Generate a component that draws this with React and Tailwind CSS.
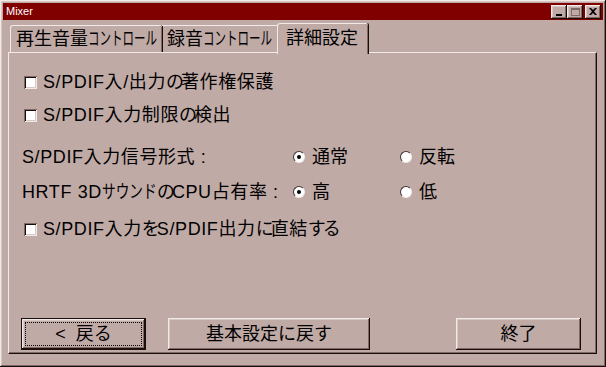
import React from 'react';

const FACE = 'bg-[#c0aaa6]';
const JP = "font-['Liberation_Sans','Noto_Sans_CJK_JP',sans-serif]";
const RAISED =
  'shadow-[inset_-1px_-1px_#1a0e0c,inset_1px_1px_#f2eae8,inset_-2px_-2px_#806864,inset_2px_2px_#d8c8c4]';

// hiragana runs are a little narrower in the original font
function Txt({ children }) {
  if (typeof children !== 'string') return children;
  return children.split(/([\u3041-\u3096]+)/).map((part, i) =>
    /^[\u3041-\u3096]+$/.test(part) ? (
      <span key={i} className="tracking-[-3px]">{part}</span>
    ) : (
      part
    )
  );
}

// narrow katakana, squeezed to the given width
function Kana({ text, width, scale }) {
  return (
    <span className={`inline-block whitespace-nowrap tracking-normal ${width}`}>
      <span className={`inline-block origin-left ${scale}`}>{text}</span>
    </span>
  );
}

function Checkbox() {
  return (
    <span className="w-[13px] h-[13px] bg-white shrink-0 shadow-[inset_1px_1px_#806864,inset_-1px_-1px_#f2eae8,inset_2px_2px_#1a0e0c,inset_-2px_-2px_#d8c8c4]" />
  );
}

function Radio({ checked }) {
  return (
    <span className="relative w-[12px] h-[12px] shrink-0 rounded-full bg-white border border-t-[#403230] border-l-[#403230] border-b-[#f2eae8] border-r-[#f2eae8] flex items-center justify-center">
      {checked && <span className="w-[4px] h-[4px] rounded-full bg-black" />}
    </span>
  );
}

function CheckRow({ label, className }) {
  return (
    <div className={`flex items-center h-[24px] ml-[15px] ${className}`}>
      <Checkbox />
      <span className="ml-[6px] text-[18px] leading-none whitespace-nowrap tracking-[0.6px]">
        <Txt>{label}</Txt>
      </span>
    </div>
  );
}

function RadioRow({ label, options, className }) {
  return (
    <div className={`flex items-center h-[24px] ml-[13px] ${className}`}>
      <span className="w-[271px] text-[18px] leading-none whitespace-nowrap tracking-[0.6px]">{label}</span>
      {options.map((opt, i) => (
        <div key={opt.text} className={`flex items-center ${i === 0 ? 'w-[107px]' : ''}`}>
          <Radio checked={opt.checked} />
          <span className="ml-[7px] text-[18px] leading-none">{opt.text}</span>
        </div>
      ))}
    </div>
  );
}

function TitleButton({ children, className = '' }) {
  return (
    <span className={`w-[16px] h-[14px] ${FACE} ${RAISED} flex items-center justify-center ${className}`}>
      {children}
    </span>
  );
}

export default function App() {
  return (
    <div className={`w-[606px] h-[367px] ${FACE} ${JP} text-black p-[3px] flex flex-col ${RAISED}`}>
      {/* title bar */}
      <div className="h-[17px] bg-[#800000] flex items-center justify-between pl-[3px] pr-[2px]">
        <span className="text-white text-[11px] leading-none">Mixer</span>
        <div className="flex items-center">
          <TitleButton>
            <span className="mt-[6px] w-[6px] h-[2px] bg-black" />
          </TitleButton>
          <TitleButton>
            <span className="w-[9px] h-[8px] border border-[#806864] border-t-2" />
          </TitleButton>
          <TitleButton className="ml-[2px]">
            <svg width="8" height="7" viewBox="0 0 8 7">
              <path d="M0 0h2l2 2 2-2h2L5 3.5 8 7H6L4 5 2 7H0l3-3.5z" fill="#000" />
            </svg>
          </TitleButton>
        </div>
      </div>

      {/* tabs */}
      <div className="flex items-end h-[32px] pl-[7px] relative z-10">
        <div className="w-[152px] h-[27px] rounded-tl-[3px] rounded-tr-[2px] border-t border-l border-[#f2eae8] shadow-[inset_-1px_0_#806864,1px_0_#1a0e0c] flex items-center pl-[5px] text-[18px] leading-none whitespace-nowrap">
          再生音量<Kana text="コントロール" width="w-[69px]" scale="scale-x-[0.64]" />
        </div>
        <div className="w-[117px] h-[27px] rounded-tr-[2px] border-t border-[#f2eae8] shadow-[inset_-1px_0_#806864,1px_0_#1a0e0c] flex items-center pl-[5px] text-[18px] leading-none whitespace-nowrap">
          録音<Kana text="コントロール" width="w-[69px]" scale="scale-x-[0.64]" />
        </div>
        <div className={`-ml-[2px] w-[91px] h-[31px] -mb-[2px] ${FACE} rounded-tl-[3px] rounded-tr-[2px] border-t border-l border-[#f2eae8] shadow-[inset_-1px_0_#806864,1px_0_#1a0e0c] flex items-start pt-[5px] pl-[8px] text-[18px] leading-none whitespace-nowrap`}>
          詳細設定
        </div>
      </div>

      {/* panel */}
      <div className="flex-1 ml-[5px] mr-[6px] mb-[10px] flex flex-col border-t border-l border-[#f2eae8] border-r border-b border-r-[#1a0e0c] border-b-[#1a0e0c] shadow-[inset_-1px_-1px_#806864]">
        <CheckRow label="S/PDIF入/出力の著作権保護" className="mt-[17px]" />
        <CheckRow label="S/PDIF入力制限の検出" className="mt-[9px]" />
        <RadioRow
          label="S/PDIF入力信号形式 :"
          className="mt-[18px]"
          options={[
            { text: '通常', checked: true },
            { text: '反転', checked: false },
          ]}
        />
        <RadioRow
          label={
            <>
              HRTF 3D
              <Kana text="サウンド" width="w-[55px]" scale="scale-x-[0.76]" />
              <Txt>のCPU占有率 :</Txt>
            </>
          }
          className="mt-[11px]"
          options={[
            { text: '高', checked: true },
            { text: '低', checked: false },
          ]}
        />
        <CheckRow label="S/PDIF入力をS/PDIF出力に直結する" className="mt-[13px]" />

        {/* buttons */}
        <div className="mt-auto mb-[3px] ml-[12px] flex items-center h-[32px]">
          <button className="w-[125px] h-[32px] border border-[#1a0e0c] p-0">
            <span className={`w-full h-full flex p-[3px] ${RAISED}`}>
              <span className="w-full h-full border border-dotted border-black flex items-center justify-center text-[18px] leading-none">
                &lt;&nbsp;&nbsp;戻る
              </span>
            </span>
          </button>
          <button className={`ml-[22px] w-[202px] h-[32px] ${RAISED} flex items-center justify-center text-[18px] leading-none`}>
            基本設定に戻す
          </button>
          <button className={`ml-[86px] w-[125px] h-[32px] ${RAISED} flex items-center justify-center text-[18px] leading-none`}>
            終了
          </button>
        </div>
      </div>
    </div>
  );
}
